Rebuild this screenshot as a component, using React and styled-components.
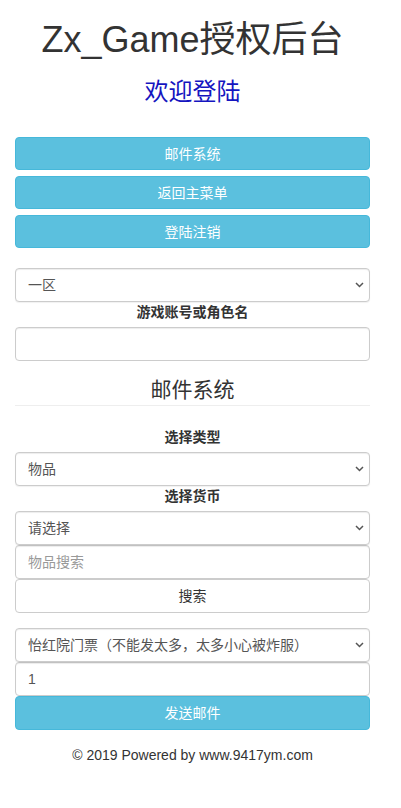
import React from 'react';
import styled, { createGlobalStyle } from 'styled-components';

const GlobalStyle = createGlobalStyle`
  html, body {
    margin: 0;
    padding: 0;
    background: #fff;
  }
  body {
    font-family: "Liberation Sans", "Noto Sans CJK SC", sans-serif;
    font-size: 14px;
    color: #333;
  }
  * {
    box-sizing: border-box;
  }
`;

const Page = styled.div`
  width: 385px;
  padding: 0 15px;
`;

const Title = styled.h1`
  margin: 20px 0 0;
  font-size: 36px;
  line-height: 40px;
  font-weight: 400;
  text-align: center;
  color: #333;
`;

const Welcome = styled.h3`
  margin: 19px 0 0;
  font-size: 24px;
  line-height: 26px;
  font-weight: 400;
  text-align: center;
  color: #1515c0;
`;

const Menu = styled.div`
  display: flex;
  flex-direction: column;
  gap: 6px;
  margin-top: 32px;
`;

const Button = styled.button`
  display: block;
  width: 100%;
  height: ${(p) => (p.tall ? 34 : 33)}px;
  padding: 0 12px;
  border: 1px solid ${(p) => (p.plain ? '#ccc' : '#46b8da')};
  border-radius: 4px;
  background: ${(p) => (p.plain ? '#fff' : '#5bc0de')};
  color: ${(p) => (p.plain ? '#333' : '#fff')};
  font-family: "Liberation Sans", "Noto Sans CJK SC", sans-serif;
  font-size: 14px;
  line-height: 20px;
  text-align: center;
  cursor: pointer;
`;

const Form = styled.div`
  display: flex;
  flex-direction: column;
  margin-top: ${(p) => p.top || 0}px;
`;

const SelectWrap = styled.div`
  position: relative;
`;

const NativeSelect = styled.select`
  display: block;
  width: 100%;
  height: 34px;
  padding: 6px 28px 6px 12px;
  border: 1px solid #ccc;
  border-radius: 4px;
  background: #fff;
  color: #555;
  font-family: "Liberation Sans", "Noto Sans CJK SC", sans-serif;
  font-size: 14px;
  box-shadow: inset 0 1px 1px rgba(0, 0, 0, 0.075), 0 1px 1px rgba(0, 0, 0, 0.06);
  appearance: none;
  -webkit-appearance: none;
`;

const Chevron = styled.svg`
  position: absolute;
  right: 6px;
  top: 14px;
  width: 9px;
  height: 6px;
  pointer-events: none;
`;

function Select({ children, ...rest }) {
  return (
    <SelectWrap>
      <NativeSelect {...rest}>{children}</NativeSelect>
      <Chevron viewBox="0 0 9 6">
        <path d="M1 1l3.5 3.5L8 1" fill="none" stroke="#555" strokeWidth="1.5" />
      </Chevron>
    </SelectWrap>
  );
}

const Input = styled.input`
  display: block;
  width: 100%;
  height: 34px;
  padding: 6px 12px;
  border: 1px solid #ccc;
  border-radius: 4px;
  background: #fff;
  color: #555;
  font-family: "Liberation Sans", "Noto Sans CJK SC", sans-serif;
  font-size: 14px;
  box-shadow: inset 0 1px 1px rgba(0, 0, 0, 0.075);

  &::placeholder {
    color: #999;
  }
`;

const Label = styled.label`
  display: block;
  margin-top: ${(p) => p.top || 0}px;
  margin-bottom: 5px;
  font-weight: 700;
  line-height: 20px;
  text-align: center;
  color: #333;
`;

const Section = styled.h4`
  margin: 17px 0 0;
  font-size: 21px;
  line-height: 24px;
  font-weight: 400;
  text-align: center;
  color: #333;
`;

const Rule = styled.hr`
  margin: 3px 0 0;
  border: 0;
  border-top: 1px solid #eee;
`;

const Footer = styled.p`
  margin: 15px 0 0;
  line-height: 20px;
  text-align: center;
  color: #333;
`;

export default function App() {
  return (
    <Page>
      <GlobalStyle />
      <Title>Zx_Game授权后台</Title>
      <Welcome>欢迎登陆</Welcome>

      <Menu>
        <Button>邮件系统</Button>
        <Button>返回主菜单</Button>
        <Button>登陆注销</Button>
      </Menu>

      <Form top={20}>
        <Select defaultValue="1">
          <option value="1">一区</option>
          <option value="2">二区</option>
        </Select>
        <Label>游戏账号或角色名</Label>
        <Input type="text" />
      </Form>

      <Section>邮件系统</Section>
      <Rule />

      <Form>
        <Label top={21}>选择类型</Label>
        <Select defaultValue="item">
          <option value="item">物品</option>
          <option value="money">货币</option>
        </Select>
        <Label>选择货币</Label>
        <Select defaultValue="">
          <option value="">请选择</option>
        </Select>
        <Input type="text" placeholder="物品搜索" />
        <Button plain tall>搜索</Button>
      </Form>

      <Form top={15}>
        <Select defaultValue="ticket">
          <option value="ticket">怡红院门票（不能发太多，太多小心被炸服）</option>
        </Select>
        <Input type="text" defaultValue="1" />
        <Button tall>发送邮件</Button>
      </Form>

      <Footer>© 2019 Powered by www.9417ym.com</Footer>
    </Page>
  );
}
